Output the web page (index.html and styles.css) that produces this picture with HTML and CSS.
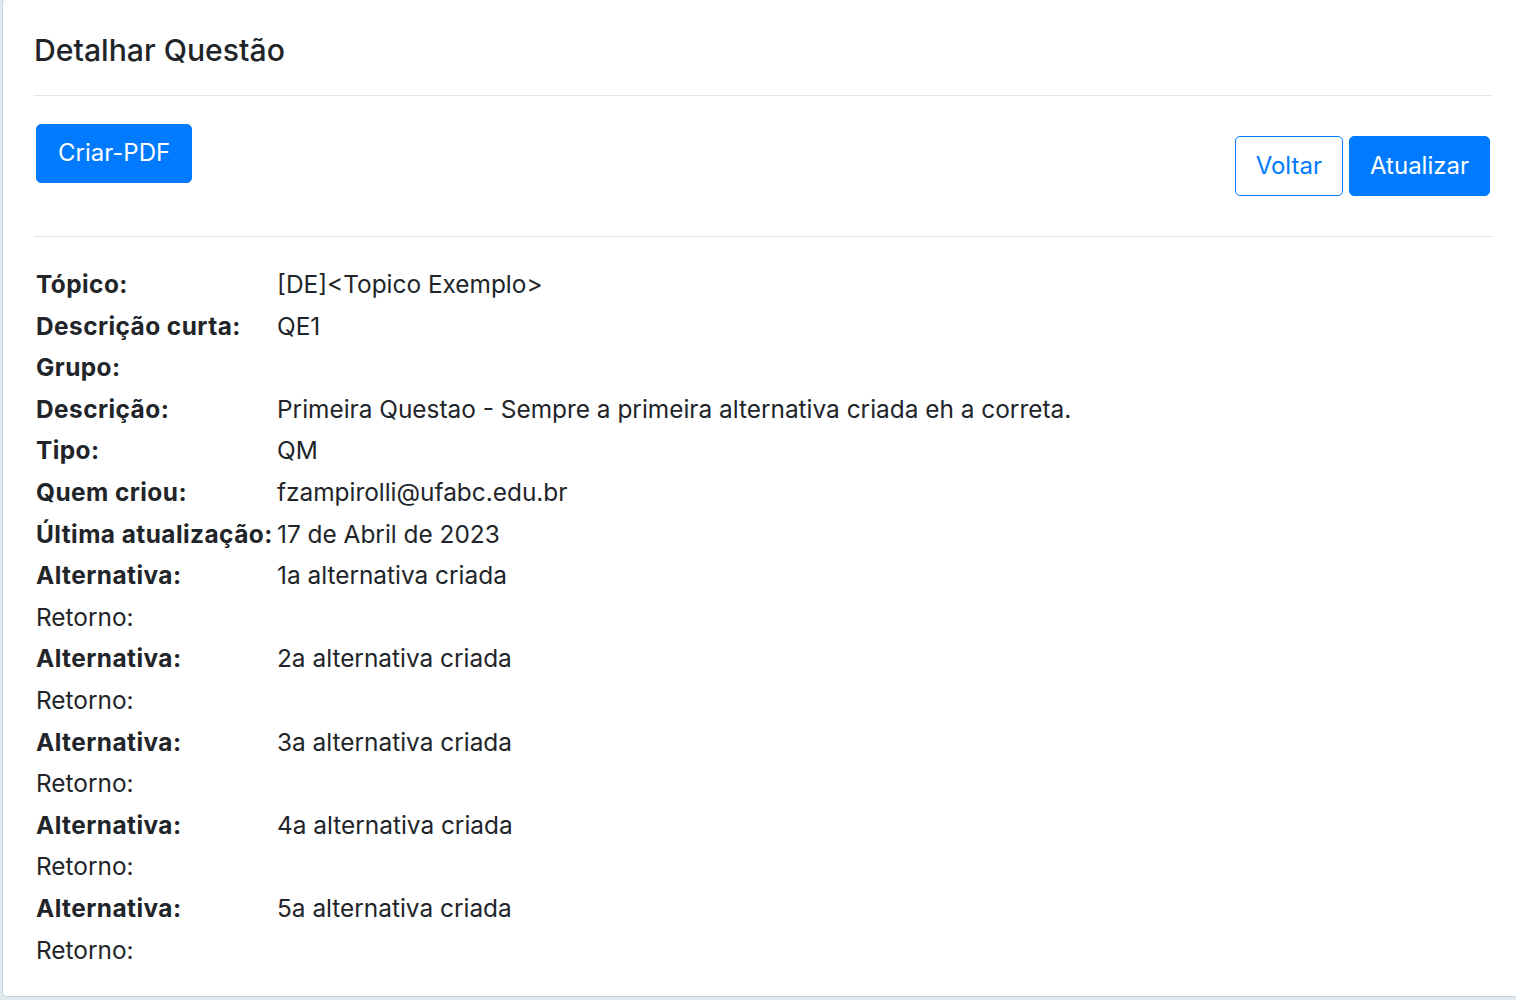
FILE: index.html
```html
<!DOCTYPE html>
<html lang="pt-BR">
<head>
<meta charset="utf-8">
<title>Detalhar Questão</title>
<link rel="stylesheet" href="styles.css">
</head>
<body>
<div class="page">
  <div class="card">
    <div class="content">
      <h3 class="title">Detalhar Questão</h3>
      <hr class="rule">
      <div class="actions">
        <button class="btn btn-primary btn-pdf">Criar-PDF</button>
        <div class="actions-right">
          <button class="btn btn-outline">Voltar</button>
          <button class="btn btn-primary">Atualizar</button>
        </div>
      </div>
      <hr class="rule rule-2">
      <dl class="details">
        <dt>Tópico:</dt><dd>[DE]&lt;Topico Exemplo&gt;</dd>
        <dt>Descrição curta:</dt><dd>QE1</dd>
        <dt>Grupo:</dt><dd></dd>
        <dt>Descrição:</dt><dd>Primeira Questao - Sempre a primeira alternativa criada eh a correta.</dd>
        <dt>Tipo:</dt><dd>QM</dd>
        <dt>Quem criou:</dt><dd>fzampirolli@ufabc.edu.br</dd>
        <dt>Última atualização:</dt><dd>17 de Abril de 2023</dd>
        <dt>Alternativa:</dt><dd>1a alternativa criada</dd>
        <dt class="plain">Retorno:</dt><dd></dd>
        <dt>Alternativa:</dt><dd>2a alternativa criada</dd>
        <dt class="plain">Retorno:</dt><dd></dd>
        <dt>Alternativa:</dt><dd>3a alternativa criada</dd>
        <dt class="plain">Retorno:</dt><dd></dd>
        <dt>Alternativa:</dt><dd>4a alternativa criada</dd>
        <dt class="plain">Retorno:</dt><dd></dd>
        <dt>Alternativa:</dt><dd>5a alternativa criada</dd>
        <dt class="plain">Retorno:</dt><dd></dd>
      </dl>
    </div>
  </div>
</div>
</body>
</html>
```
FILE: styles.css
```css
html, body {
  margin: 0;
  padding: 0;
  background: #dfe9ef;
  overflow: hidden;
}
body {
  font-family: Inter, "Liberation Sans", sans-serif;
  color: #212529;
}
.page {
  padding-left: 2px;
  height: 1000px;
}
.card {
  background: #fff;
  border: 1px solid #c9d6dd;
  border-right: none;
  border-top: none;
  border-radius: 0 0 0 5px;
  height: 997px;
  box-sizing: border-box;
  padding-left: 31px;
  position: relative;
}
.card::before {
  content: "";
  position: absolute;
  left: -1px;
  top: 0;
  width: 6px;
  height: 5px;
  border-top-left-radius: 5px;
  border-left: 1px solid #c9d6dd;
}
.content {
  width: 1458px;
}
.title {
  margin: 0;
  padding-top: 33px;
  font-size: 30.2px;
  line-height: 35px;
  font-weight: 500;
}
.rule {
  margin: 27px 0 0;
  border: 0;
  border-top: 1px solid #e5e5e5;
  height: 0;
}
.rule-2 {
  margin-top: 40px;
}
.actions {
  margin-top: 28px;
  display: flex;
  justify-content: space-between;
  align-items: flex-start;
  padding: 0 2px;
}
.actions-right {
  margin-top: 12px;
  display: flex;
  gap: 6px;
}
.btn {
  font-family: inherit;
  font-size: 24px;
  line-height: 30px;
  border-radius: 5px;
  padding: 14px 20px;
  border: 1px solid #007bff;
  cursor: pointer;
}
.btn-pdf {
  padding: 13px 21px 14px;
}
.btn-primary {
  background: #007bff;
  color: #fff;
}
.btn-outline {
  background: #fff;
  color: #007bff;
}
.details {
  margin: 27px 0 0;
  padding-left: 2px;
  display: grid;
  grid-template-columns: 241px 1fr;
  font-size: 24.4px;
  line-height: 41.6px;
}
.details dt {
  font-weight: 700;
  margin: 0;
  white-space: nowrap;
  letter-spacing: 0.45px;
}
.details dt.plain {
  font-weight: 400;
  letter-spacing: 0;
}
.details dd {
  margin: 0;
}
```
